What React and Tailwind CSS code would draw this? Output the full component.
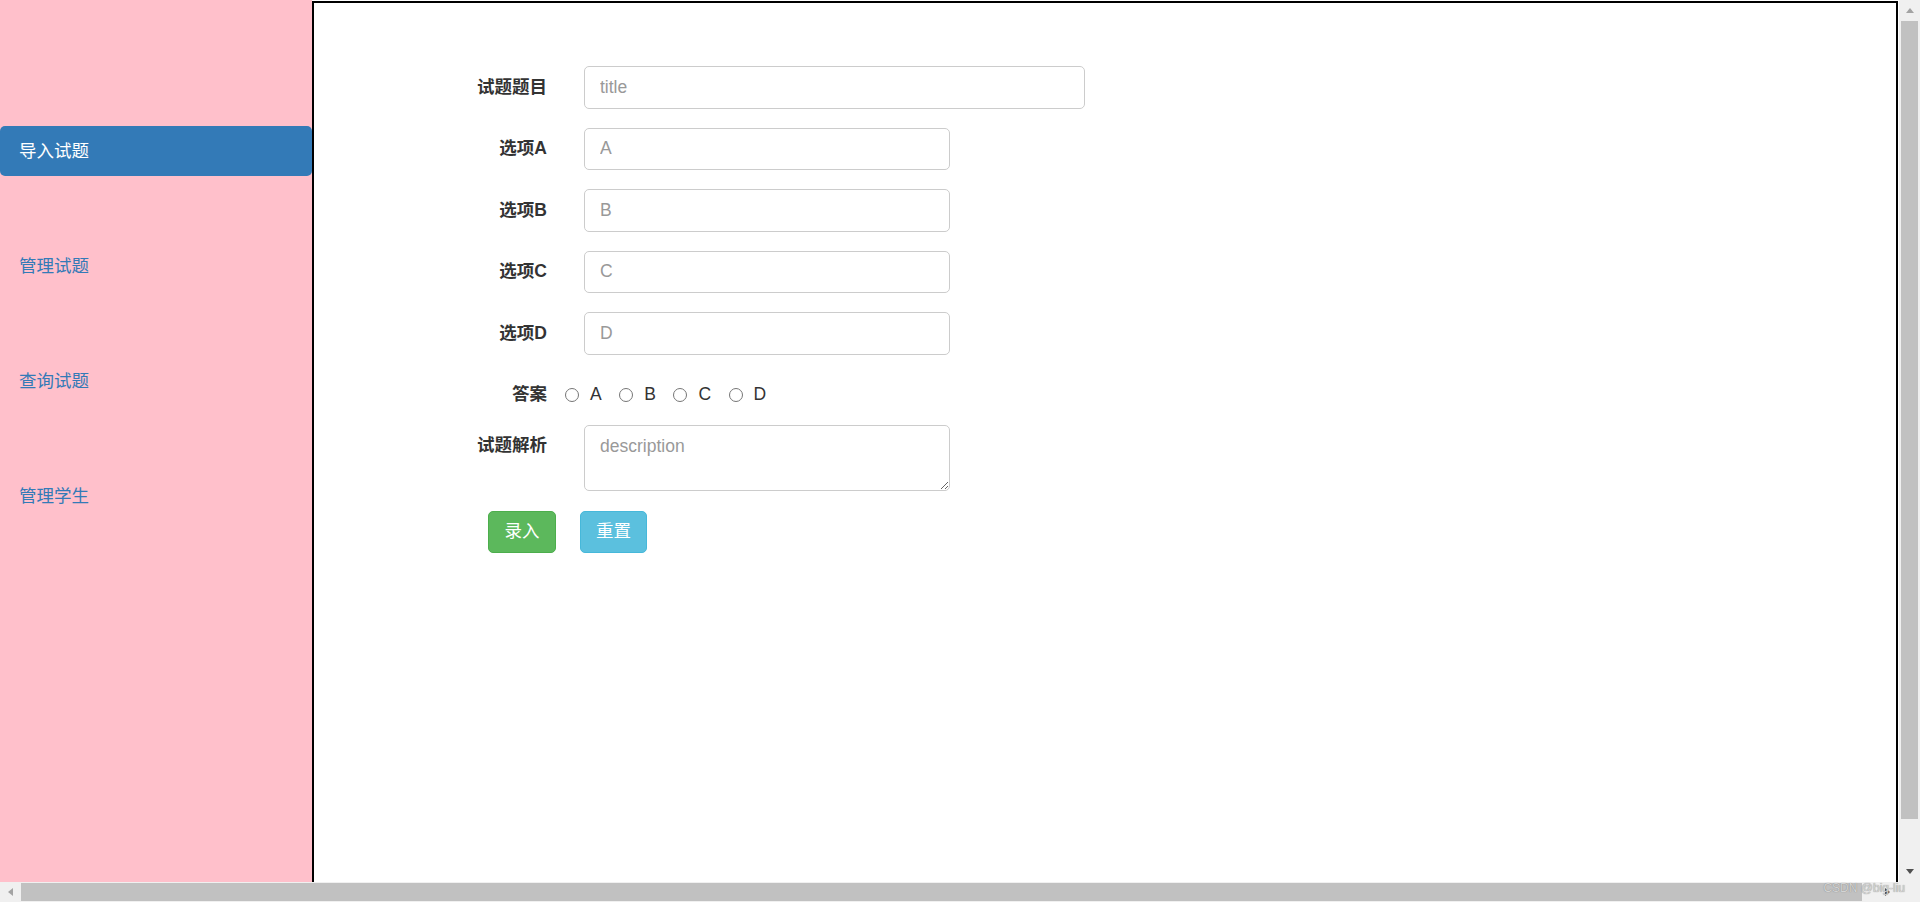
import { useState } from "react";

const navItems = ["导入试题", "管理试题", "查询试题", "管理学生"];

const optionFields = [
  { label: "选项A", placeholder: "A" },
  { label: "选项B", placeholder: "B" },
  { label: "选项C", placeholder: "C" },
  { label: "选项D", placeholder: "D" },
];

function Triangle({ dir, color }) {
  const points = {
    up: "0,5 4,0 8,5",
    down: "0,0 8,0 4,5",
    left: "5,0 5,8 0,4",
    right: "0,0 0,8 5,4",
  }[dir];
  const vertical = dir === "up" || dir === "down";
  return (
    <svg width={vertical ? 8 : 5} height={vertical ? 5 : 8} viewBox={vertical ? "0 0 8 5" : "0 0 5 8"}>
      <polygon points={points} fill={color} />
    </svg>
  );
}

function FormRow({ label, children, top }) {
  return (
    <div className={`flex ${top ? "items-start" : "items-center"} gap-[37px]`}>
      <label
        className={`w-[120px] shrink-0 text-right font-bold text-[#333] ${top ? "pt-[8px]" : ""}`}
      >
        {label}
      </label>
      {children}
    </div>
  );
}

export default function App() {
  const [active, setActive] = useState(0);
  const [answer, setAnswer] = useState(null);

  return (
    <div className="relative flex h-[902px] w-[1920px] flex-col overflow-hidden bg-white text-[17.5px] leading-[25px] font-['Liberation_Sans','Noto_Sans_CJK_SC',sans-serif]">
      <div className="flex min-h-0 flex-1">
        {/* side nav */}
        <aside className="flex w-[312px] shrink-0 flex-col gap-[65px] bg-[#ffc0cb] pt-[126px]">
          {navItems.map((item, i) => (
            <a
              key={item}
              href="#"
              onClick={(e) => {
                e.preventDefault();
                setActive(i);
              }}
              className={`flex h-[50px] items-center rounded-[5px] px-[19px] ${
                i === active ? "bg-[#337ab7] text-white" : "text-[#337ab7]"
              }`}
            >
              {item}
            </a>
          ))}
        </aside>

        {/* main panel */}
        <main className="mt-px w-[1586px] shrink-0 border-2 border-b-0 border-black bg-white pt-[63px] pl-[113px]">
          <form className="flex flex-col">
            <div className="flex flex-col gap-[19px]">
              <FormRow label="试题题目">
                <input
                  placeholder="title"
                  className="h-[42.5px] w-[501px] rounded-[5px] border border-[#ccc] px-[15px] text-[#555] placeholder:text-[#999] outline-none"
                />
              </FormRow>
              {optionFields.map((f) => (
                <FormRow key={f.label} label={f.label}>
                  <input
                    placeholder={f.placeholder}
                    className="h-[42.5px] w-[366px] rounded-[5px] border border-[#ccc] px-[15px] text-[#555] placeholder:text-[#999] outline-none"
                  />
                </FormRow>
              ))}

              <div className="flex h-[42px] items-center gap-[18px]">
                <label className="w-[120px] shrink-0 text-right font-bold text-[#333]">答案</label>
                <div className="flex items-center">
                  {["A", "B", "C", "D"].map((opt) => (
                    <label key={opt} className="mr-[17.5px] flex items-center gap-[11px] text-[#333]">
                      <input
                        type="radio"
                        name="answer"
                        checked={answer === opt}
                        onChange={() => setAnswer(opt)}
                        className="m-0 h-[14px] w-[14px]"
                      />
                      {opt}
                    </label>
                  ))}
                </div>
              </div>
            </div>

            <div className="mt-[9px]">
              <FormRow label="试题解析" top>
                <textarea
                  rows={2}
                  placeholder="description"
                  className="block h-[66px] w-[366px] rounded-[5px] border border-[#ccc] px-[15px] py-[8px] text-[#555] placeholder:text-[#999] outline-none"
                />
              </FormRow>
            </div>

            <div className="mt-[20px] ml-[61px] flex gap-[24px]">
              <button
                type="button"
                className="h-[42.5px] w-[68px] rounded-[5px] border border-[#4cae4c] bg-[#5cb85c] text-white"
              >
                录入
              </button>
              <button
                type="reset"
                className="h-[42.5px] w-[67px] rounded-[5px] border border-[#46b8da] bg-[#5bc0de] text-white"
              >
                重置
              </button>
            </div>
          </form>
        </main>

        <div className="w-px shrink-0 bg-white" />

        {/* vertical scrollbar */}
        <div className="flex w-[21px] shrink-0 flex-col bg-[#f0f0f0]">
          <div className="flex h-[21px] items-center justify-center">
            <Triangle dir="up" color="#a3a3a3" />
          </div>
          <div className="mx-[2px] h-[798px] bg-[#c1c1c1]" />
          <div className="flex-1" />
          <div className="flex h-[21px] items-center justify-center">
            <Triangle dir="down" color="#505050" />
          </div>
        </div>
      </div>

      {/* horizontal scrollbar */}
      <div className="flex h-[20px] shrink-0 bg-[#f0f0f0]">
        <div className="flex w-[21px] items-center justify-center">
          <Triangle dir="left" color="#a3a3a3" />
        </div>
        <div className="my-[1px] w-[1841px] bg-[#c1c1c1]" />
        <div className="flex w-[37px] items-center justify-end pr-[9px]">
          <Triangle dir="right" color="#505050" />
        </div>
        <div className="w-[21px] bg-[#f0f0f0]" />
      </div>

      <span className="absolute bottom-[7px] right-[15px] text-[12px] leading-[14px] text-[#d4d4d4] [text-shadow:0_0_1px_#777]">
        CSDN @big-liu
      </span>
    </div>
  );
}
